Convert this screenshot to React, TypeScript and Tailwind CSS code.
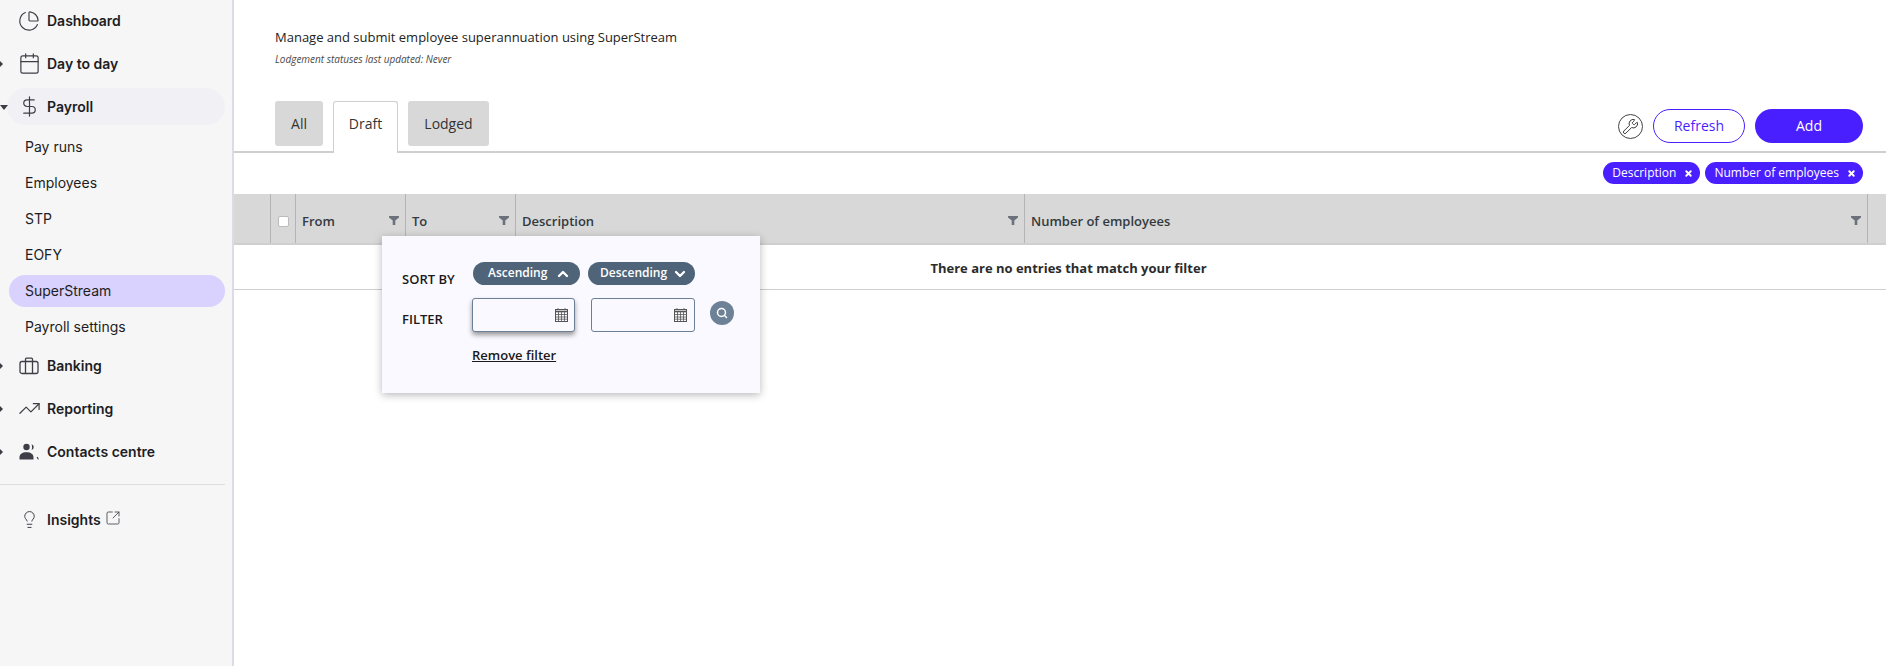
import React from "react";
import { Calendar, DollarSign, TrendingUp, Lightbulb, SquareArrowOutUpRight, Wrench, ChartPie, ChevronUp, ChevronDown, Search, X } from "lucide-react";

function Briefcase() {
  return (
    <svg width="20" height="18" viewBox="0 0 20 18" fill="none" stroke="#3e3e48" strokeWidth="1.3">
      <rect x="1" y="4.5" width="18" height="12" rx="2" />
      <path d="M6.5 4.5V2.2a1 1 0 0 1 1-1h5a1 1 0 0 1 1 1v2.3M6.5 4.5v12M13.5 4.5v12" />
    </svg>
  );
}

function People() {
  return (
    <svg width="20" height="18" viewBox="0 0 20 18" fill="#3e3e48">
      <circle cx="7.5" cy="4" r="3.2" />
      <path d="M0.5 16.5v-2.2c0-3 2.6-5 7-5s7 2 7 5v2.2z" />
      <path d="M12.5 1.2a3 3 0 0 1 0 5.8c.8-1.700.8-4.100 0-5.800z" />
      <path d="M17.500 14.500l1.500 2h.8l-1-2.800z" />
    </svg>
  );
}

function Filter() {
  return (
    <svg width="10" height="9" viewBox="0 0 10 9" fill="#6c717c" className="mt-[4px]">
      <path d="M0 0h10v1.500L6.300 4.500V9H3.700V4.500L0 1.500z" />
    </svg>
  );
}

function CalIcon() {
  return (
    <svg width="13" height="14" viewBox="0 0 13 14" fill="none" stroke="#555" strokeWidth="1">
      <rect x="0.5" y="1.500" width="12" height="12" />
      <path d="M0.500 3.500h12" strokeWidth="1.600" />
      <path d="M3 0v2M10 0v2M0.500 6.500h12M0.500 9h12M0.500 11.200h12M3.500 3.500v10M6.500 3.500v10M9.500 3.500v10" strokeWidth="0.800" />
    </svg>
  );
}

function Caret({ open }: { open?: boolean }) {
  return open ? (
    <span className="absolute left-0 top-1/2 -mt-[2px] border-x-[4px] border-t-[5px] border-x-transparent border-t-[#3c3c44]" />
  ) : (
    <span className="absolute left-0 top-1/2 -mt-[3px] border-y-[3px] border-l-[3px] border-y-transparent border-l-[#3c3c44]" />
  );
}

function NavMain({ icon, label, caret, active }: { icon: React.ReactNode; label: React.ReactNode; caret?: "open" | "closed"; active?: boolean }) {
  return (
    <div className="relative h-[37px] flex items-center">
      {caret && <Caret open={caret === "open"} />}
      <div className={`ml-[7px] w-[218px] h-[37px] rounded-full flex items-center ${active ? "bg-[#f0f0f5]" : ""}`}>
        <span className="w-[40px] flex justify-center shrink-0 pl-[4px]">{icon}</span>
        <span className="text-[14px] font-semibold text-[#1d1d24]">{label}</span>
      </div>
    </div>
  );
}

function NavSub({ label, active }: { label: string; active?: boolean }) {
  return (
    <div className={`ml-[9px] w-[216px] h-[32px] rounded-full flex items-center pl-[16px] pb-[2px] text-[14px] text-[#1d1d24] ${active ? "bg-[#d9d2ff]" : ""}`}>
      {label}
    </div>
  );
}

function Tag({ label }: { label: string }) {
  return (
    <span className="h-[22px] rounded-full bg-[#4a1fff] text-white text-[12px] flex items-center pl-[9px] pr-[7px] gap-[8px]">
      {label}
      <X size={9} strokeWidth={5} />
    </span>
  );
}

function Head({ label, className }: { label: string; className: string }) {
  return (
    <div className={`${className} shrink-0 border-r border-[#b4b4b4] flex items-center justify-between pl-[6px] pr-[6px]`}>
      <span className="text-[13px] font-semibold text-[#333a40] pt-[6px]">{label}</span>
      <Filter />
    </div>
  );
}

export default function App() {
  const stroke = { strokeWidth: 1.25, color: "#3e3e48" };
  return (
    <div className="w-[1886px] h-[666px] flex overflow-hidden bg-white" style={{ fontFamily: '"Open Sans", sans-serif' }}>
      <aside className="w-[234px] shrink-0 h-full bg-[#f6f6f6] border-r-2 border-[#dcdce8] pt-[2px]" style={{ fontFamily: 'Inter, sans-serif' }}>
        <div className="flex flex-col gap-[6px]">
          <NavMain icon={<ChartPie size={22} {...stroke} />} label="Dashboard" />
          <NavMain icon={<Calendar size={23} {...stroke} />} label="Day to day" caret="closed" />
          <NavMain icon={<DollarSign size={23} {...stroke} />} label="Payroll" caret="open" active />
        </div>
        <div className="flex flex-col gap-[4px] mt-[6px] mb-[4px]">
          <NavSub label="Pay runs" />
          <NavSub label="Employees" />
          <NavSub label="STP" />
          <NavSub label="EOFY" />
          <NavSub label="SuperStream" active />
          <NavSub label="Payroll settings" />
        </div>
        <div className="flex flex-col gap-[6px]">
          <NavMain icon={<Briefcase />} label="Banking" caret="closed" />
          <NavMain icon={<TrendingUp size={23} {...stroke} />} label="Reporting" caret="closed" />
          <NavMain icon={<People />} label="Contacts centre" caret="closed" />
        </div>
        <div className="w-[225px] border-t border-[#dedee2] mt-[14px] mb-[16px]" />
        <NavMain
          icon={<Lightbulb size={19} {...stroke} />}
          label={
            <span className="flex items-center gap-[4px]">
              Insights
              <SquareArrowOutUpRight size={16} strokeWidth={1.25} color="#3e3e48" className="-mt-[3px]" />
            </span>
          }
        />
      </aside>

      <main className="flex-1 min-w-0 relative">
        <div className="pl-[41px] pt-[28px]">
          <p className="text-[13px] leading-[18px] text-[#222] w-[600px]">Manage and submit employee superannuation using SuperStream</p>
          <p className="text-[10px] leading-[14px] italic text-[#4a4a4a] mt-[6px]">Lodgement statuses last updated: Never</p>
        </div>

        <div className="mt-[35px] h-[52px] border-b-2 border-[#cfcfcf] flex items-start justify-between pl-[41px] pr-[23px]">
          <div className="flex gap-[10px]">
            <span className="h-[45px] w-[48px] rounded-[3px] bg-[#d8d8d8] text-[14px] text-[#333] flex items-center justify-center">All</span>
            <span className="h-[52px] w-[65px] rounded-t-[3px] border border-b-0 border-[#cfcfcf] bg-white text-[14px] text-[#333] flex items-start pt-[11px] justify-center relative z-10">Draft</span>
            <span className="h-[45px] w-[81px] rounded-[3px] bg-[#d8d8d8] text-[14px] text-[#333] flex items-center justify-center">Lodged</span>
          </div>
          <div className="flex items-center gap-[10px] mt-[8px]">
            <span className="w-[25px] h-[25px] rounded-full border border-[#444] flex items-center justify-center">
              <Wrench size={17} strokeWidth={1.4} color="#3a3a3a" />
            </span>
            <span className="w-[92px] h-[34px] rounded-full border border-[#4a1fff] text-[#4a1fff] text-[14px] pb-[1px] flex items-center justify-center">Refresh</span>
            <span className="w-[108px] h-[34px] rounded-full bg-[#4a1fff] text-white text-[14px] font-medium pb-[1px] flex items-center justify-center">Add</span>
          </div>
        </div>

        <div className="h-[41px] flex items-start justify-end gap-[5px] pr-[23px] pt-[9px]">
          <Tag label="Description" />
          <Tag label="Number of employees" />
        </div>

        <div className="h-[51px] bg-[#d8d8d8] border-b-2 border-[#cfcfcf] flex">
          <div className="w-[37px] shrink-0 border-r border-[#b4b4b4]" />
          <div className="w-[25px] shrink-0 border-r border-[#b4b4b4] flex items-center justify-center">
            <span className="w-[11px] h-[11px] rounded-[2px] bg-white border border-[#bbb] mt-[6px]" />
          </div>
          <Head label="From" className="w-[110px]" />
          <Head label="To" className="w-[110px]" />
          <Head label="Description" className="w-[509px]" />
          <Head label="Number of employees" className="w-[843px]" />
          <div className="flex-1" />
        </div>

        <div className="h-[45px] border-b border-[#cfcfcf] flex items-center justify-center pt-[3px] text-[13px] font-bold text-[#2b2b2b]">
          <span className="ml-[17px]">There are no entries that match your filter</span>
        </div>

        <div className="absolute left-[148px] top-[236px] w-[378px] h-[157px] bg-[#faf9ff] shadow-[0_2px_8px_rgba(0,0,0,0.28)] z-20 pt-[26px] pl-[20px]">
          <div className="flex">
            <span className="w-[71px] text-[13px] leading-[20px] font-semibold text-[#1a1a1a] pt-[7px]">SORT BY</span>
            <div className="flex gap-[8px]">
              <span className="w-[107px] h-[23px] rounded-full bg-[#4f6379] text-white text-[12px] font-semibold flex items-center pl-[15px] pb-[2px] gap-[8px]">
                Ascending <ChevronUp size={16} strokeWidth={3.5} className="mt-[2px]" />
              </span>
              <span className="w-[107px] h-[23px] rounded-full bg-[#4f6379] text-white text-[12px] font-semibold flex items-center pl-[12px] pb-[2px] gap-[5px]">
                Descending <ChevronDown size={16} strokeWidth={3.5} className="mt-[2px]" />
              </span>
            </div>
          </div>
          <div className="flex mt-[9px]">
            <span className="w-[70px] text-[13px] leading-[20px] font-semibold text-[#1a1a1a] pt-[11px]">FILTER</span>
            <span className="w-[103px] h-[34px] rounded-[3px] border border-[#6b7f96] bg-[#faf9ff] shadow-[0_3px_5px_rgba(0,0,0,0.4)] flex items-center justify-end pr-[6px]">
              <CalIcon />
            </span>
            <span className="ml-[16px] w-[104px] h-[34px] rounded-[3px] border border-[#6b7f96] flex items-center justify-end pr-[7px]">
              <CalIcon />
            </span>
            <span className="ml-[15px] mt-[3px] w-[24px] h-[24px] rounded-full bg-[#6e8297] flex items-center justify-center">
              <Search size={12} strokeWidth={3} color="white" />
            </span>
          </div>
          <div className="ml-[70px] mt-[13px] text-[13px] font-semibold text-[#1a1a1a] underline leading-[20px]">Remove filter</div>
        </div>
      </main>
    </div>
  );
}
